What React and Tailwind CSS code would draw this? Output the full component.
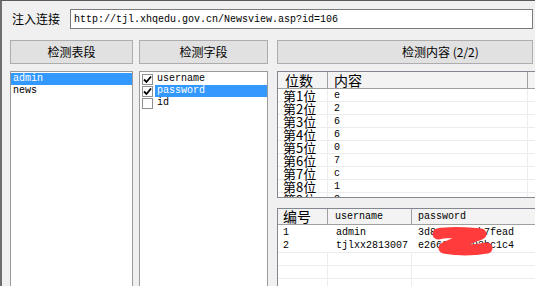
import React from 'react';

const cjk = { fontFamily: '"Noto Sans CJK SC", "Liberation Sans", sans-serif' };
const mono = { fontFamily: '"Liberation Mono", "Noto Sans CJK SC", monospace' };

const digits = ['e', '2', '6', '6', '0', '7', 'c', '1', '2'];
const rows = [
  { id: '1', user: 'admin', pass: '3d8a1c4e59b7fead' },
  { id: '2', user: 'tjlxx2813007', pass: 'e26607c1d93bc1c4' },
];

function Button({ children, className = '' }) {
  return (
    <div
      className={`h-[24px] flex items-center border border-[#adadad] bg-[#e1e1e1] text-[12px] text-black ${className}`}
      style={cjk}
    >
      {children}
    </div>
  );
}

function Check({ on }) {
  return (
    <div className="w-[11px] h-[11px] border border-[#8f8f8f] bg-white flex items-center justify-center shrink-0">
      {on && (
        <svg width="9" height="9" viewBox="0 0 9 9">
          <path d="M1 4.5 L3.5 7 L8 1.5" fill="none" stroke="#000" strokeWidth="1.8" />
        </svg>
      )}
    </div>
  );
}

export default function App() {
  return (
    <div className="w-[535px] h-[286px] overflow-hidden bg-[#f0f0f0] border-t border-t-[#5a5a5a] border-l-2 border-l-[#6e6e6e] pl-[8px] relative">
      {/* url row */}
      <div className="flex items-center mt-[8px] h-[20px]">
        <span className="ml-[2px] w-[58px] text-[12px] text-black" style={cjk}>注入连接</span>
        <div className="w-[463px] h-[20px] border border-[#7a7a7a] bg-white flex items-center pl-[3px] text-[10px] text-black" style={mono}>
          http://tjl.xhqedu.gov.cn/Newsview.asp?id=106
        </div>
      </div>

      {/* headers */}
      <div className="flex mt-[11px]">
        <Button className="w-[123px] justify-center">检测表段</Button>
        <Button className="w-[129px] ml-[6px] justify-center">检测字段</Button>
        <Button className="w-[256px] ml-[9px] pl-[124px]">检测内容 (2/2)</Button>
      </div>

      <div className="flex mt-[7px] items-start">
        {/* tables list */}
        <div className="w-[123px] h-[240px] border border-[#9a9a9a] bg-white pt-[1px] text-[10px]" style={mono}>
          <div className="h-[12px] leading-[12px] bg-[#3399ff] text-white pl-[2px]">admin</div>
          <div className="h-[12px] leading-[12px] text-black pl-[2px]">news</div>
        </div>

        {/* columns list */}
        <div className="w-[129px] h-[240px] ml-[6px] border border-[#9a9a9a] bg-white pt-[1px] text-[10px]" style={mono}>
          {[
            ['username', true, false],
            ['password', true, true],
            ['id', false, false],
          ].map(([name, on, sel]) => (
            <div key={name} className="h-[12px] flex items-center pl-[2px]">
              <Check on={on} />
              <span
                className={`ml-[2px] h-[12px] leading-[12px] pl-[2px] flex-1 ${sel ? 'bg-[#3399ff] text-white' : 'text-black'}`}
              >
                {name}
              </span>
            </div>
          ))}
        </div>

        {/* content */}
        <div className="flex-1 ml-[9px] flex flex-col">
          <div className="h-[127px] border border-r-0 border-[#828790] bg-white overflow-hidden">
            <div className="flex h-[17px] bg-[#f3f3f3] border-b border-[#a0a0a0] text-[14px] leading-[17px]" style={cjk}>
              <div className="w-[50px] border-r border-[#a0a0a0] pl-[7px]">位数</div>
              <div className="w-[200px] border-r border-[#a0a0a0] pl-[6px]">内容</div>
              <div className="flex-1" />
            </div>
            {digits.map((d, i) => (
              <div key={i} className="flex h-[13px] border-b border-[#ececec]">
                <div className="w-[50px] border-r border-[#ececec] pl-[5px] text-[13px] leading-[13px]" style={cjk}>
                  第{i + 1}位
                </div>
                <div className="w-[200px] border-r border-[#ececec] pl-[6px] text-[10px] leading-[13px]" style={mono}>
                  {d}
                </div>
                <div className="flex-1" />
              </div>
            ))}
          </div>

          <div className="mt-[10px] h-[80px] border border-r-0 border-[#828790] bg-white">
            <div className="flex h-[16px] bg-[#f3f3f3] border-b border-[#a0a0a0] leading-[15px]">
              <div className="w-[50px] border-r border-[#a0a0a0] pl-[5px] text-[14px]" style={cjk}>编号</div>
              <div className="w-[84px] border-r border-[#a0a0a0] pl-[7px] text-[10px]" style={mono}>username</div>
              <div className="flex-1 pl-[6px] text-[10px]" style={mono}>password</div>
            </div>
            <div className="pt-[1px]">
              {rows.map((r) => (
                <div key={r.id} className="flex h-[13px] text-[10px] leading-[14px]" style={mono}>
                  <div className="w-[50px] pl-[5px]">{r.id}</div>
                  <div className="w-[84px] pl-[8px]">{r.user}</div>
                  <div className="flex-1 pl-[6px]">{r.pass}</div>
                </div>
              ))}
            </div>
            {[0, 1, 2].map((i) => (
              <div key={i} className="flex h-[13px] border-t border-[#ececec]">
                <div className="w-[50px] border-r border-[#ececec]" />
                <div className="w-[84px] border-r border-[#ececec]" />
                <div className="flex-1" />
              </div>
            ))}
          </div>
        </div>
      </div>

      {/* red scribble over password */}
      <svg className="absolute left-[0px] top-[0px] pointer-events-none" width="535" height="286" viewBox="0 0 535 286">
        <path
          d="M436 233 C450 230 466 232 479 233 C468 238 452 241 442 247 C458 250 474 249 485 247"
          fill="none"
          stroke="#ff3b3b"
          strokeWidth="11"
          strokeLinecap="round"
          strokeLinejoin="round"
        />
      </svg>
    </div>
  );
}
